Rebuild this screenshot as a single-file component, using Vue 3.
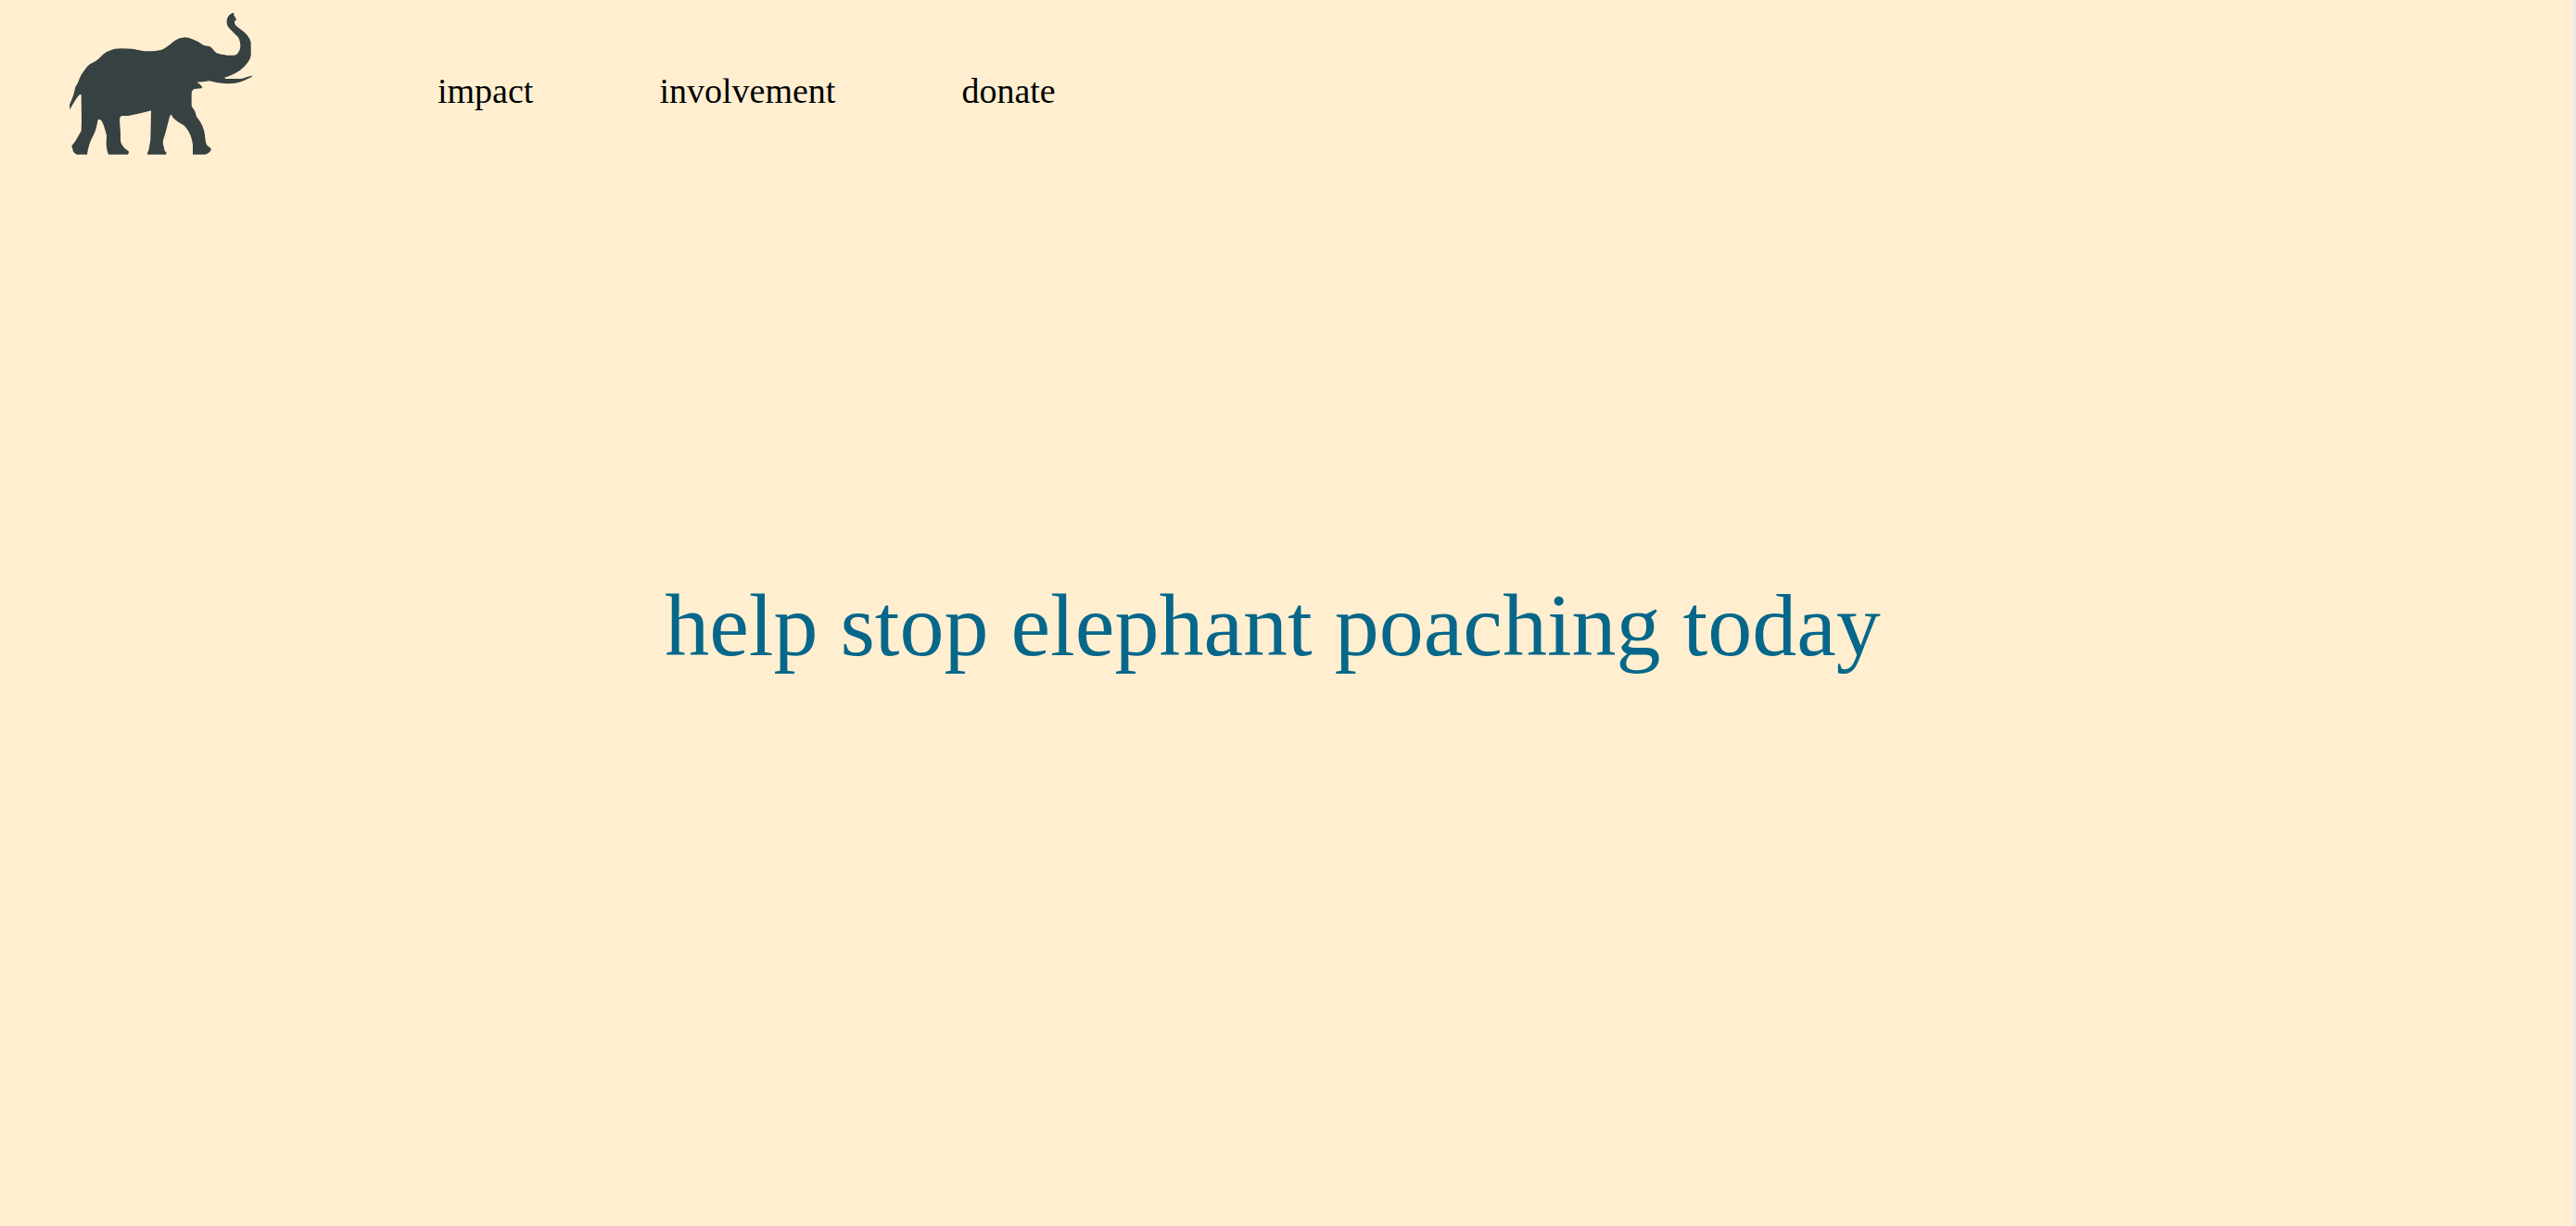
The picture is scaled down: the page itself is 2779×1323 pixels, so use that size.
<script setup>
const links = [
  { label: 'impact', href: '#impact' },
  { label: 'involvement', href: '#involvement' },
  { label: 'donate', href: '#donate' },
]
</script>

<template>
  <div class="page">
    <header class="header">
      <a class="logo" href="#" aria-label="Home">
        <svg viewBox="0 0 690 540" aria-hidden="true">
          <path
            fill="#384141"
            d="M46 355 L45 340 L57 310 L64 282 L72 268 C78 248 88 233 98 221 C104 213 110 208 118 204 C130 198 138 193 146 184 C155 174 162 169 172 165 C185 159 198 157 212 157 L248 158 C266 160 278 166 298 166 C315 166 328 165 343 161 C362 154 372 141 385 132 C396 125 406 122 418 121 C434 122 449 129 461 135 C469 140 476 146 483 148 C490 149 497 149 502 152 C509 158 513 166 521 172 C530 176 543 177 555 179 C567 180 579 180 586 176 C592 171 597 162 598 151 C598 140 596 129 591 121 C582 110 567 98 558 86 C552 77 553 63 558 54 C562 47 569 43 574 41 C578 43 578 47 577 51 L582 55 L581 59 L586 61 L583 66 C579 68 578 70 580 77 C584 86 596 93 608 102 C618 110 628 122 632 137 L632 179 C630 193 619 207 607 219 C592 233 572 244 547 251 L549 255 L600 255 C614 252 622 247 635 245 L635 249 C629 252 622 255 614 259 C600 267 580 271 553 271 C533 270 514 266 498 262 L477 265 L457 266 L467 273 L475 282 L472 286 L449 288 C442 292 440 297 440 305 L440 342 C443 351 449 355 452 363 C454 371 455 377 459 382 C466 391 473 401 477 413 C483 427 483 440 485 454 C486 464 488 470 494 474 C500 477 504 480 503 485 C500 492 493 497 484 500 L444 500 L444 468 C441 452 438 438 431 427 C425 417 418 407 410 403 C400 398 388 389 380 381 L373 370 L369 378 L356 428 L348 454 C347 462 347 469 350 475 L353 488 L359 494 L357 500 L297 500 L297 495 L301 487 C303 474 306 464 307 451 L309 358 L277 366 L235 375 L213 375 L208 380 C206 398 210 414 210 431 C210 445 209 457 213 466 C219 477 228 485 236 489 L237 495 L233 500 L171 500 C167 490 165 480 164 467 L165 438 C160 420 156 403 148 390 L142 386 L137 388 C133 409 130 425 121 440 C112 456 105 476 102 500 L69 500 C61 496 55 490 55 482 L52 474 C54 468 60 464 64 457 L83 424 L84 395 L83 306 L78 306 L70 315 L58 334 Z"
          />
        </svg>
      </a>
      <nav class="nav" aria-label="Main">
        <a v-for="link in links" :key="link.label" :href="link.href">{{ link.label }}</a>
      </nav>
    </header>
    <main class="hero">
      <h1>help stop elephant poaching today</h1>
    </main>
  </div>
</template>

<style>
body {
  margin: 0;
  background: #ffefd0;
}
</style>

<style scoped>
.page {
  box-sizing: border-box;
  min-height: 100vh;
  border-right: 3px solid #e8e8e8;
  background: #ffefd0;
  font-family: "Liberation Serif", "Times New Roman", serif;
}

.header {
  display: flex;
  align-items: center;
  padding: 0 60px;
}

.logo {
  display: block;
  width: 230px;
  height: 196px;
}

.logo svg {
  display: block;
  width: 230px;
  height: 180px;
}

.nav {
  display: flex;
  gap: 136px;
  margin-left: 182px;
}

.nav a {
  color: #000;
  font-size: 38px;
  line-height: 44px;
  text-decoration: none;
}

.hero {
  padding: 424px 30px 0 0;
  text-align: center;
}

h1 {
  margin: 0;
  color: #07678a;
  font-size: 96px;
  font-weight: 400;
  line-height: 110px;
}
</style>
